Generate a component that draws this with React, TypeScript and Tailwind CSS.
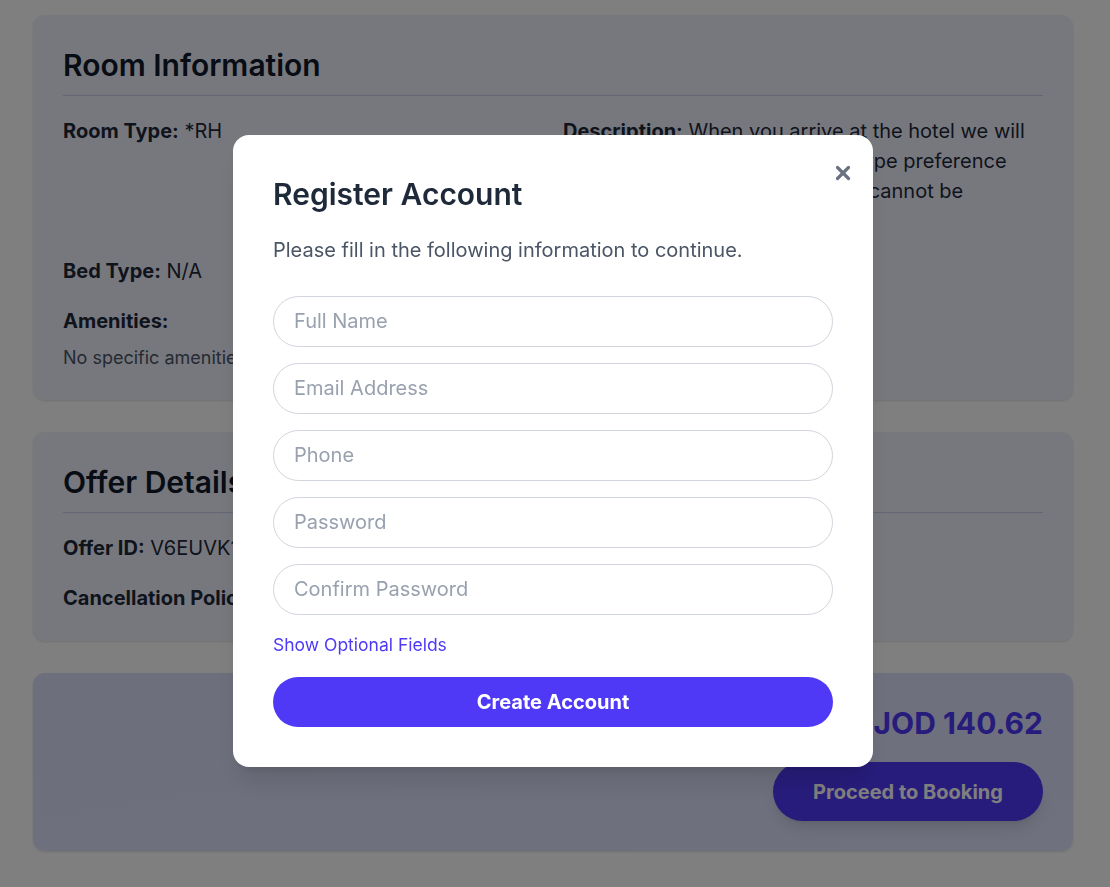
import React from "react";
import { X } from "lucide-react";

const fields = ["Full Name", "Email Address", "Phone", "Password", "Confirm Password"];

const Field: React.FC<{ label: string; value: React.ReactNode }> = ({ label, value }) => (
  <p className="text-xl leading-[30px] text-gray-800">
    <span className="font-bold">{label}:</span> {value}
  </p>
);

const RegisterModal: React.FC = () => {
  return (
    <div className="fixed inset-0 z-50 flex items-center justify-center bg-black/50">
      <div className="relative mt-[14px] mr-1 w-[640px] rounded-2xl bg-white px-10 pb-10 pt-[41px] shadow-xl">
        <button className="absolute right-[19px] top-[27px] flex h-[22px] w-[22px] items-center justify-center text-gray-500">
          <X className="h-[22px] w-[22px]" strokeWidth={3.5} />
        </button>
        <h2 className="text-3xl font-semibold text-gray-800">Register Account</h2>
        <p className="mt-6 text-xl leading-7 text-gray-600">Please fill in the following information to continue.</p>

        <div className="mt-8 flex flex-col gap-4">
          {fields.map((f) => (
            <input
              key={f}
              type={f.includes("Password") ? "password" : "text"}
              placeholder={f}
              className="h-[51px] w-full rounded-full border border-gray-300 px-5 text-xl text-gray-800 placeholder:text-gray-400 outline-none"
            />
          ))}
        </div>

        <button className="mt-[18px] block text-[17.5px] leading-6 text-indigo-600">Show Optional Fields</button>

        <button className="mt-5 h-[50px] w-full rounded-full bg-indigo-600 text-xl font-bold text-white">
          Create Account
        </button>
      </div>
    </div>
  );
};

export default function App() {
  return (
    <div className="min-h-screen bg-white font-['Inter',sans-serif]">
      <div className="flex flex-col gap-8 pb-8 pl-[33px] pr-[37px] pt-[15px]">
        {/* Room info */}
        <section className="rounded-xl bg-[#eef1fd] px-[30px] pb-[30px] pt-8 shadow-sm">
          <h2 className="border-b border-[#c7cde6] pb-3 text-3xl font-semibold text-gray-900">Room Information</h2>
          <div className="mt-5 grid grid-cols-2 gap-5">
            <Field label="Room Type" value="*RH" />
            <Field
              label="Description"
              value="When you arrive at the hotel we will do our best to meet your room type preference which hinges on availability and cannot be guaranteed."
            />
            <Field label="Bed Type" value="N/A" />
            <div />
            <div className="col-span-2">
              <p className="text-xl font-bold leading-[30px] text-gray-800">Amenities:</p>
              <p className="mt-2.5 text-lg leading-6 text-gray-600">No specific amenities listed</p>
            </div>
          </div>
        </section>

        {/* Offer details */}
        <section className="rounded-xl bg-[#eef1fd] px-[30px] pb-[28px] pt-8 shadow-sm">
          <h2 className="border-b border-[#c7cde6] pb-3 text-3xl font-semibold text-gray-900">Offer Details</h2>
          <div className="mt-5 flex flex-col gap-5">
            <Field label="Offer ID" value="V6EUVK1Q2P" />
            <Field label="Cancellation Policy" value="Non-refundable" />
          </div>
        </section>

        {/* Price */}
        <section className="flex flex-col items-end rounded-xl bg-gradient-to-br from-[#dadefb] to-[#dfe2fc] p-[30px] shadow-sm">
          <p className="text-3xl font-bold leading-10 text-indigo-600">JOD 140.62</p>
          <button className="mt-[19px] h-[59px] w-[270px] rounded-full bg-indigo-600 text-xl font-bold text-white shadow-lg">
            Proceed to Booking
          </button>
        </section>
      </div>
      <RegisterModal />
    </div>
  );
}
